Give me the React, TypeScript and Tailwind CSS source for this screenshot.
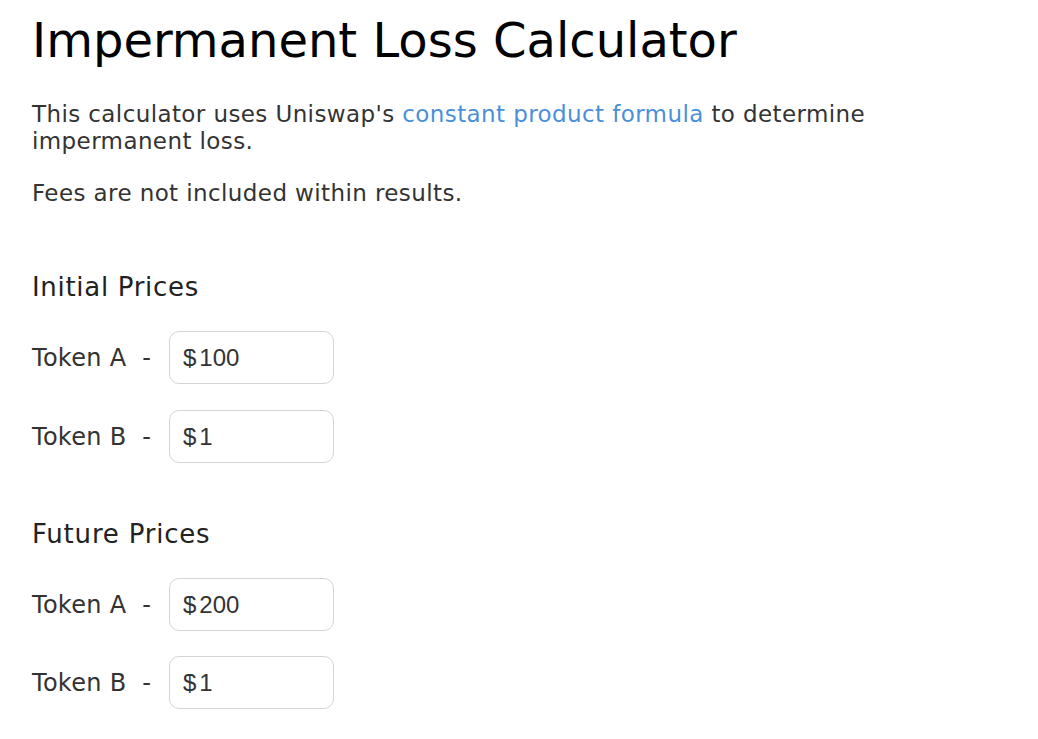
import { useState } from 'react';

function PriceRow({ label, value, onChange }: { label: string; value: string; onChange: (v: string) => void }) {
  return (
    <div className="flex items-center h-[53px]">
      <span className="w-[137px] text-[24px] tracking-[0.3px] text-[#333]">
        {label}&nbsp;&nbsp;-
      </span>
      <div className="flex items-center w-[165px] h-[53px] border border-[#d4d4d4] rounded-[10px] px-[13px] bg-white">
        <span className="text-[24px] text-[#333] font-['Liberation_Sans',Arial,sans-serif]">$</span>
        <input
          value={value}
          onChange={(e) => onChange(e.target.value)}
          className="w-full ml-[3px] outline-none text-[24px] text-[#333] font-['Liberation_Sans',Arial,sans-serif]"
        />
      </div>
    </div>
  );
}

export default function App() {
  const [initA, setInitA] = useState('100');
  const [initB, setInitB] = useState('1');
  const [futA, setFutA] = useState('200');
  const [futB, setFutB] = useState('1');

  return (
    <div className="min-h-screen bg-white px-[32px] pt-[12px] font-['DejaVu_Sans',sans-serif] text-[#222]">
      <h1 className="text-[48px] leading-[56px] text-black">Impermanent Loss Calculator</h1>

      <p className="mt-[33px] text-[23px] leading-[27px] tracking-[0.4px] text-[#333] max-w-[880px]">
        <span>This calculator uses Uniswap's </span>
        <a href="#" className="text-[#4a90d9]">constant product formula</a>
        <span> to determine</span>
        <br />
        <span>impermanent loss.</span>
      </p>
      <p className="mt-[25px] text-[23px] leading-[27px] tracking-[0.4px] text-[#333]">
        Fees are not included within results.
      </p>

      {/* Initial */}
      <h2 className="mt-[64px] text-[26px] leading-[32px] tracking-[0.7px] font-medium text-[#222]">Initial Prices</h2>
      <div className="mt-[28px] flex flex-col gap-[26px]">
        <PriceRow label="Token A" value={initA} onChange={setInitA} />
        <PriceRow label="Token B" value={initB} onChange={setInitB} />
      </div>

      {/* Future */}
      <h2 className="mt-[55px] text-[26px] leading-[32px] tracking-[0.8px] font-medium text-[#222]">Future Prices</h2>
      <div className="mt-[28px] flex flex-col gap-[25px]">
        <PriceRow label="Token A" value={futA} onChange={setFutA} />
        <PriceRow label="Token B" value={futB} onChange={setFutB} />
      </div>
    </div>
  );
}
